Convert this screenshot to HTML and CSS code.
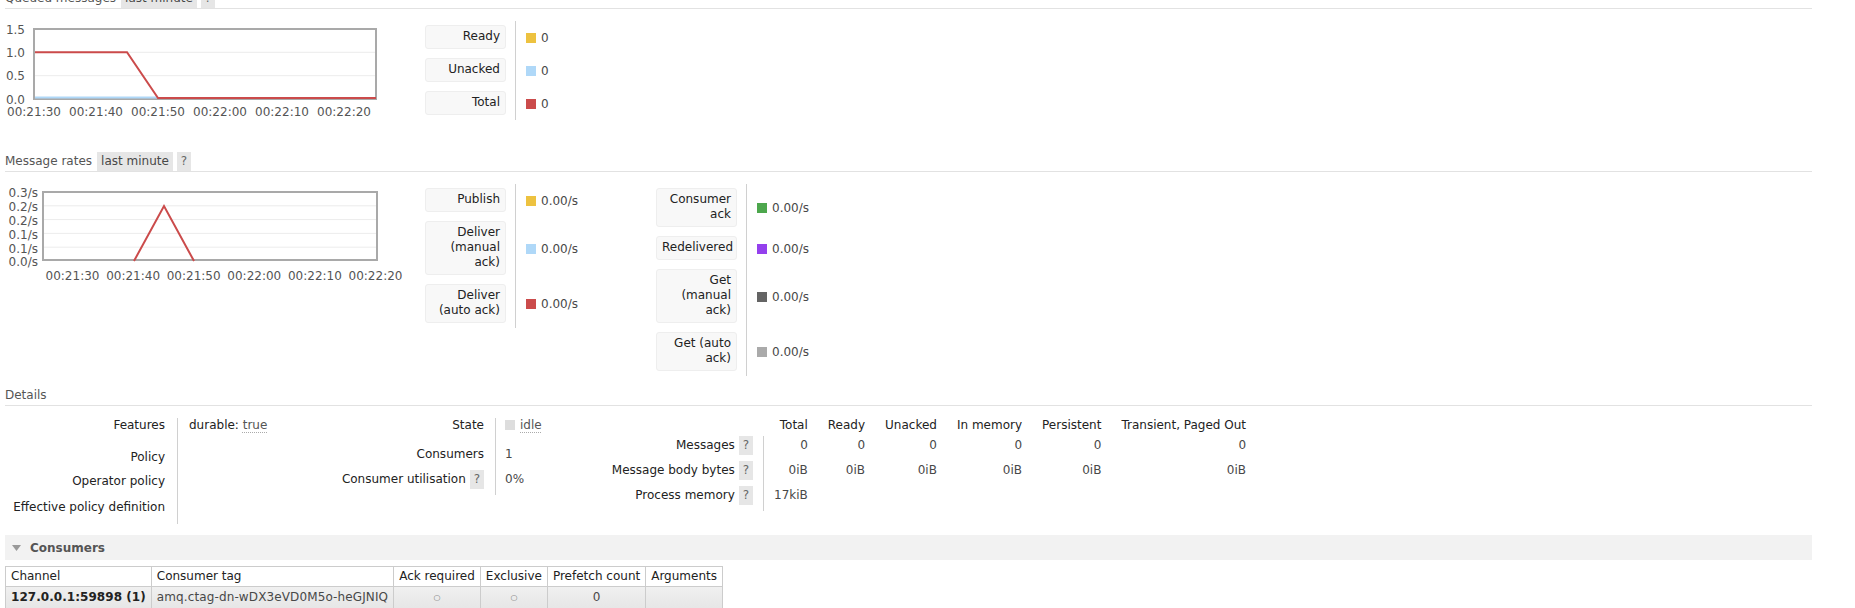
FILE: index.html
```html
<!DOCTYPE html>
<html>
<head>
<meta charset="utf-8">
<title>Queue</title>
<link rel="stylesheet" href="styles.css">
</head>
<body>
<div class="page">

  <div class="sec-head">
    <span class="title">Queued messages</span><span class="opt">last minute</span><span class="help">?</span>
  </div>
  <div class="chart-row">
    <svg class="chart" width="410" height="100" viewBox="0 0 410 100">
      <line class="grid" x1="30" x2="371" y1="31.3" y2="31.3"/>
      <line class="grid" x1="30" x2="371" y1="54.7" y2="54.7"/>
      <rect class="frame" x="29" y="8" width="342" height="70"/>
      <polyline class="s-blue" points="30,76.5 153,76.5"/>
      <polyline class="s-red" points="30,31.3 122,31.3 153,77 371,77"/>
      <text class="yl" x="20" y="12.5">1.5</text>
      <text class="yl" x="20" y="35.8">1.0</text>
      <text class="yl" x="20" y="59.2">0.5</text>
      <text class="yl" x="20" y="82.5">0.0</text>
      <text class="xl" x="29" y="94.5">00:21:30</text>
      <text class="xl" x="91" y="94.5">00:21:40</text>
      <text class="xl" x="153" y="94.5">00:21:50</text>
      <text class="xl" x="215" y="94.5">00:22:00</text>
      <text class="xl" x="277" y="94.5">00:22:10</text>
      <text class="xl" x="339" y="94.5">00:22:20</text>
    </svg>
    <table class="legend first">
      <tr><th><div class="lbl">Ready</div></th><td><div class="val"><span class="sw yellow"></span>0</div></td></tr>
      <tr><th><div class="lbl">Unacked</div></th><td><div class="val"><span class="sw lblue"></span>0</div></td></tr>
      <tr><th><div class="lbl">Total</div></th><td><div class="val"><span class="sw red"></span>0</div></td></tr>
    </table>
  </div>

  <div class="sec-head gap-top">
    <span class="title">Message rates</span><span class="opt">last minute</span><span class="help">?</span>
  </div>
  <div class="chart-row">
    <svg class="chart" width="410" height="100" viewBox="0 0 410 100">
      <line class="grid" x1="39" x2="372" y1="21.8" y2="21.8"/>
      <line class="grid" x1="39" x2="372" y1="35.6" y2="35.6"/>
      <line class="grid" x1="39" x2="372" y1="49.4" y2="49.4"/>
      <line class="grid" x1="39" x2="372" y1="63.2" y2="63.2"/>
      <rect class="frame" x="38" y="8" width="334" height="68"/>
      <polyline class="s-red" points="129,77 159,22 189,77"/>
      <text class="yl" x="33" y="13.4">0.3/s</text>
      <text class="yl" x="33" y="27.2">0.2/s</text>
      <text class="yl" x="33" y="41">0.2/s</text>
      <text class="yl" x="33" y="54.8">0.1/s</text>
      <text class="yl" x="33" y="68.6">0.1/s</text>
      <text class="yl" x="33" y="82.4">0.0/s</text>
      <text class="xl" x="67.5" y="95.5">00:21:30</text>
      <text class="xl" x="128.1" y="95.5">00:21:40</text>
      <text class="xl" x="188.7" y="95.5">00:21:50</text>
      <text class="xl" x="249.3" y="95.5">00:22:00</text>
      <text class="xl" x="309.9" y="95.5">00:22:10</text>
      <text class="xl" x="370.5" y="95.5">00:22:20</text>
    </svg>
    <table class="legend first">
      <tr><th><div class="lbl">Publish</div></th><td><div class="val"><span class="sw yellow"></span>0.00/s</div></td></tr>
      <tr><th><div class="lbl">Deliver (manual ack)</div></th><td><div class="val"><span class="sw lblue"></span>0.00/s</div></td></tr>
      <tr><th><div class="lbl">Deliver (auto ack)</div></th><td><div class="val"><span class="sw red"></span>0.00/s</div></td></tr>
    </table>
    <table class="legend">
      <tr><th><div class="lbl">Consumer ack</div></th><td><div class="val"><span class="sw green"></span>0.00/s</div></td></tr>
      <tr><th><div class="lbl">Redelivered</div></th><td><div class="val"><span class="sw purple"></span>0.00/s</div></td></tr>
      <tr><th><div class="lbl">Get (manual ack)</div></th><td><div class="val"><span class="sw dgray"></span>0.00/s</div></td></tr>
      <tr><th><div class="lbl">Get (auto ack)</div></th><td><div class="val"><span class="sw lgray"></span>0.00/s</div></td></tr>
    </table>
  </div>

  <div class="sec-head details-head">
    <span class="title">Details</span>
  </div>
  <div class="details">
    <table class="facts ta">
      <tr class="r1"><th>Features</th><td><span class="dark">durable:</span> <abbr class="dot">true</abbr></td></tr>
      <tr class="r2"><th>Policy</th><td></td></tr>
      <tr class="r3"><th>Operator policy</th><td></td></tr>
      <tr class="r4"><th>Effective policy definition</th><td></td></tr>
    </table>
    <table class="facts tb">
      <tr class="r1"><th>State</th><td><span class="state-sq"></span><abbr class="dot">idle</abbr></td></tr>
      <tr class="r2"><th>Consumers</th><td>1</td></tr>
      <tr class="r3"><th>Consumer utilisation <span class="help">?</span></th><td>0%</td></tr>
    </table>
    <table class="facts tc">
      <tr class="hdr"><th class="rl"></th><th class="c1">Total</th><th>Ready</th><th>Unacked</th><th>In memory</th><th>Persistent</th><th>Transient, Paged Out</th></tr>
      <tr><th class="rl">Messages <span class="help">?</span></th><td class="c1">0</td><td>0</td><td>0</td><td>0</td><td>0</td><td>0</td></tr>
      <tr><th class="rl">Message body bytes <span class="help">?</span></th><td class="c1">0iB</td><td>0iB</td><td>0iB</td><td>0iB</td><td>0iB</td><td>0iB</td></tr>
      <tr><th class="rl">Process memory <span class="help">?</span></th><td class="c1">17kiB</td><td></td><td></td><td></td><td></td><td></td></tr>
    </table>
  </div>

  <div class="bar">
    <svg class="tri" width="9" height="6" viewBox="0 0 9 6"><polygon points="0,0 9,0 4.5,6"/></svg>
    <span class="bar-title">Consumers</span>
  </div>
  <table class="list">
    <thead>
      <tr><th>Channel</th><th>Consumer tag</th><th>Ack required</th><th>Exclusive</th><th>Prefetch count</th><th>Arguments</th></tr>
    </thead>
    <tbody>
      <tr><td class="b">127.0.0.1:59898 (1)</td><td class="tag">amq.ctag-dn-wDX3eVD0M5o-heGJNIQ</td><td class="c"><span class="circ">&#9675;</span></td><td class="c"><span class="circ">&#9675;</span></td><td class="c">0</td><td></td></tr>
    </tbody>
  </table>

</div>
</body>
</html>
```

FILE: styles.css
```css
html, body {
  margin: 0;
  padding: 0;
  background: #fff;
}
body {
  font: 12px "DejaVu Sans", Verdana, sans-serif;
  color: #484848;
  overflow: hidden;
}
.page {
  margin: -11px 43px 0 5px;
}

/* section headers */
.sec-head {
  display: flex;
  gap: 4px;
  line-height: 19px;
  border-bottom: 1px solid #e2e2e2;
  color: #555;
}
.sec-head .title {
  padding-right: 1px;
}
.sec-head .opt {
  background: #e6e6e6;
  padding: 0 4px;
  color: #484848;
}
.help {
  display: inline-block;
  background: #e6e6e6;
  padding: 0 4px;
  line-height: 19px;
  color: #666;
  font-weight: normal;
}
.gap-top {
  margin-top: 31px;
}
.details-head {
  margin-top: 10px;
}

/* charts */
.chart-row {
  display: flex;
  align-items: flex-start;
  margin-top: 12px;
}
.chart {
  display: block;
  flex: none;
}
.chart text {
  font: 12px "DejaVu Sans", Verdana, sans-serif;
  fill: #545454;
}
.chart .yl { text-anchor: end; }
.chart .xl { text-anchor: middle; }
.chart .grid { stroke: #ececec; stroke-width: 1; }
.chart .frame { fill: none; stroke: #a9a9a9; stroke-width: 2; }
.chart .s-red { fill: none; stroke: #cb4b4b; stroke-width: 2; stroke-linejoin: miter; }
.chart .s-blue { fill: none; stroke: #afd8f8; stroke-width: 2; }

/* legends */
.legend {
  border-collapse: separate;
  border-spacing: 0;
  flex: none;
}
.legend th {
  padding: 0 9px 0 10px;
  font-weight: normal;
  vertical-align: top;
}
.legend td {
  border-left: 1px solid #d0d0d0;
  padding: 0 0 0 10px;
  vertical-align: middle;
}
.legend.first td {
  width: 120px;
}
.lbl {
  width: 81px;
  box-sizing: border-box;
  margin: 4px 0 5px;
  padding: 3px 5px 4px;
  background: #f8f8f8;
  border: 1px solid #eee;
  border-radius: 3px;
  text-align: right;
  line-height: 15px;
  color: #222;
}
.val {
  display: flex;
  align-items: center;
  white-space: nowrap;
}
.sw {
  display: inline-block;
  width: 10px;
  height: 10px;
  margin-right: 5px;
}
.yellow { background: #edc240; }
.lblue { background: #afd8f8; }
.red { background: #cb4b4b; }
.green { background: #4da74d; }
.purple { background: #9440ed; }
.dgray { background: #646464; }
.lgray { background: #aaaaaa; }

/* details */
.details {
  display: flex;
  align-items: flex-start;
  margin-top: 12px;
}
.facts {
  border-collapse: separate;
  border-spacing: 0;
  flex: none;
}
.facts th {
  font-weight: normal;
  color: #222;
  text-align: right;
  vertical-align: top;
  white-space: nowrap;
}
.facts td {
  vertical-align: top;
  white-space: nowrap;
}
.ta th, .ta td {
  line-height: 15px;
  padding-top: 0;
}
.ta .r1 > * { padding-bottom: 17px; }
.ta .r2 > * { padding-bottom: 9px; }
.ta .r3 > * { padding-bottom: 11px; }
.ta .r4 > * { padding-bottom: 9px; }
.ta th {
  width: 160px;
  padding-left: 0;
  padding-right: 12px;
}
.ta td {
  width: 111px;
  border-left: 1px solid #d0d0d0;
  padding-left: 11px;
  padding-right: 0;
}
.dark { color: #222; }
abbr.dot {
  text-decoration: underline dotted #aaa;
  text-underline-offset: 3px;
  color: #555;
}

.tb th, .tb td {
  line-height: 15px;
  padding-top: 0;
}
.tb th {
  width: 184px;
  padding-left: 0;
  padding-right: 11px;
}
.tb td {
  width: 56px;
  border-left: 1px solid #d0d0d0;
  padding-left: 9px;
  padding-right: 0;
}
.tb .r1 > * { padding-bottom: 14px; }
.tb .r2 > * { padding-bottom: 8px; }
.tb .r3 > * { padding-bottom: 6px; line-height: 19px; }
.state-sq {
  display: inline-block;
  width: 10px;
  height: 10px;
  background: #ddd;
  margin-right: 5px;
  vertical-align: -1px;
}

.tc th, .tc td {
  text-align: right;
  padding: 0 10px;
}
.tc .hdr th {
  line-height: 15px;
  padding-bottom: 3px;
  color: #222;
}
.tc th.rl {
  width: 192px;
  padding: 0 10px 0 0;
}
.tc .hdr th.c1 {
  border-left: 1px solid transparent;
}
.tc tr:not(.hdr) > * {
  line-height: 19px;
  padding-bottom: 6px;
}
.tc td.c1 {
  border-left: 1px solid #d0d0d0;
}

/* consumers */
.bar {
  display: flex;
  align-items: center;
  height: 25px;
  margin-top: 11px;
  padding-left: 7px;
  background: #f2f2f2;
}
.tri {
  display: block;
  fill: #999;
  margin-right: 9px;
}
.bar-title {
  font-weight: bold;
  color: #555;
}
.list {
  margin-top: 6px;
  border-collapse: collapse;
}
.list th, .list td {
  border: 1px solid #ccc;
  padding: 2px 5px;
  line-height: 15px;
  text-align: left;
  white-space: nowrap;
}
.list th {
  font-weight: normal;
  color: #222;
  background: #fff;
}
.list tbody tr {
  background: linear-gradient(#f0f0f0, #e6e6e6);
}
.list td {
  padding-top: 3px;
  padding-bottom: 3px;
}
.list td.b {
  font-weight: bold;
  color: #222;
  letter-spacing: 0.05px;
}
.list td.tag {
  letter-spacing: 0.12px;
}
.list td.c {
  text-align: center;
}
.circ {
  font-size: 8px;
  color: #777;
  vertical-align: 1px;
}
```
